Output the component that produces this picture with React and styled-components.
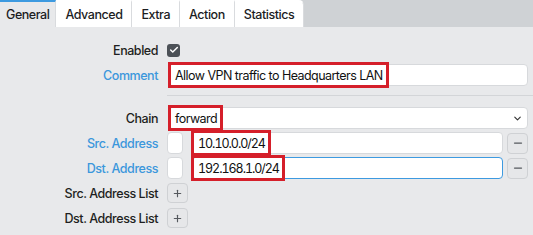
import React from "react";
import styled, { createGlobalStyle } from "styled-components";
import { ChevronDown, Check, Plus, Minus } from "lucide-react";

const Global = createGlobalStyle`
  html, body {
    margin: 0;
    background: #e8e9eb;
    font-family: Inter, "Noto Sans", sans-serif;
    font-size: 12.5px;
    letter-spacing: -0.45px;
    color: #1e1f21;
  }
`;

const TabBar = styled.div`
  display: flex;
  height: 27px;
  background: #cfd2d5;
  align-items: stretch;
`;

const Tab = styled.div`
  display: flex;
  align-items: center;
  padding: 0 ${(p) => (p.$active ? "6px" : "9px")};
  font-weight: 500;
  box-sizing: border-box;
  background: ${(p) => (p.$active ? "#e8e9eb" : "#ffffff")};
  border-top: 2px solid ${(p) => (p.$active ? "#3d9ae0" : "#ffffff")};
  border-right: 1px solid #d9dbde;
  border-radius: ${(p) => (p.$last ? "0 5px 0 0" : "0")};
  color: #1c1d1f;
`;

const Form = styled.div`
  display: flex;
  flex-direction: column;
  gap: 3px;
  padding: 12px 5px 0 0;
`;

const Row = styled.div`
  display: grid;
  grid-template-columns: 158px 1fr;
  column-gap: 9px;
  align-items: center;
  height: 22px;
`;

const Label = styled.div`
  text-align: right;
  font-weight: 500;
  color: ${(p) => (p.$link ? "#3b97dc" : "#1e1f21")};
  white-space: nowrap;
`;

const Controls = styled.div`
  display: flex;
  align-items: center;
  gap: 8px;
  height: 100%;
`;

const CheckBox = styled.div`
  width: 13px;
  height: 13px;
  border-radius: 3px;
  background: #4c5157;
  display: flex;
  align-items: center;
  justify-content: center;
  color: #fff;
`;

const Field = styled.div`
  position: relative;
  flex: 1;
  display: flex;
  align-items: stretch;
  height: 100%;
  box-sizing: border-box;
  background: #fff;
  border: 1px solid ${(p) => (p.$focus ? "#3d9ae0" : "#d7d9dc")};
  border-radius: 4px;
  margin-left: ${(p) => p.$shift || 0}px;
`;

const Mark = styled.span`
  display: flex;
  align-items: center;
  margin: -3px 0 -3px -1px;
  padding: 0 3px 0 4px;
  border: 3px solid #d51f2a;
  color: #111;
  white-space: nowrap;
  font-variant-numeric: ${(p) => (p.$num ? "tabular-nums" : "normal")};
  letter-spacing: ${(p) => (p.$num ? "-1.05px" : "-0.55px")};
`;

const Chevron = styled.span`
  margin-left: auto;
  margin-right: 4px;
  display: flex;
  align-items: center;
  color: #333;
`;

const Toggle = styled.div`
  width: 16px;
  height: 22px;
  box-sizing: border-box;
  background: #fff;
  border: 1px solid #d7d9dc;
  border-radius: 4px;
  flex: none;
`;

const IconButton = styled.div`
  width: 21px;
  height: ${(p) => p.$h || 21}px;
  box-sizing: border-box;
  border: 1px solid #cfd1d4;
  border-radius: 4px;
  background: #e6e7e9;
  display: flex;
  align-items: center;
  justify-content: center;
  color: #55595e;
  flex: none;
  margin-left: ${(p) => (p.$minus ? "-4px" : "0")};
`;

const Separator = styled.div`
  height: 1px;
  background: #d3d5d8;
  margin: 6px -5px 8px 167px;
`;

const tabs = ["General", "Advanced", "Extra", "Action", "Statistics"];

export default function App() {
  return (
    <>
      <Global />
      <TabBar>
        {tabs.map((t, i) => (
          <Tab key={t} $active={i === 0} $last={i === tabs.length - 1}>
            {t}
          </Tab>
        ))}
      </TabBar>
      <Form>
        <Row>
          <Label>Enabled</Label>
          <Controls>
            <CheckBox>
              <Check size={10} strokeWidth={3.5} />
            </CheckBox>
          </Controls>
        </Row>
        <Row>
          <Label $link>Comment</Label>
          <Controls>
            <Field $shift={1}>
              <Mark>Allow VPN traffic to Headquarters LAN</Mark>
            </Field>
          </Controls>
        </Row>
        <Separator />
        <Row>
          <Label>Chain</Label>
          <Controls>
            <Field $shift={1}>
              <Mark>forward</Mark>
              <Chevron>
                <ChevronDown size={11} strokeWidth={2.5} />
              </Chevron>
            </Field>
          </Controls>
        </Row>
        <Row>
          <Label $link>Src. Address</Label>
          <Controls>
            <Toggle />
            <Field>
              <Mark $num>10.10.0.0/24</Mark>
            </Field>
            <IconButton $minus>
              <Minus size={12} strokeWidth={2.5} />
            </IconButton>
          </Controls>
        </Row>
        <Row>
          <Label $link>Dst. Address</Label>
          <Controls>
            <Toggle />
            <Field $focus>
              <Mark $num>192.168.1.0/24</Mark>
            </Field>
            <IconButton $minus>
              <Minus size={12} strokeWidth={2.5} />
            </IconButton>
          </Controls>
        </Row>
        <Row>
          <Label>Src. Address List</Label>
          <Controls>
            <IconButton $h={20}>
              <Plus size={11} strokeWidth={2.5} />
            </IconButton>
          </Controls>
        </Row>
        <Row>
          <Label>Dst. Address List</Label>
          <Controls>
            <IconButton $h={20}>
              <Plus size={11} strokeWidth={2.5} />
            </IconButton>
          </Controls>
        </Row>
      </Form>
    </>
  );
}
